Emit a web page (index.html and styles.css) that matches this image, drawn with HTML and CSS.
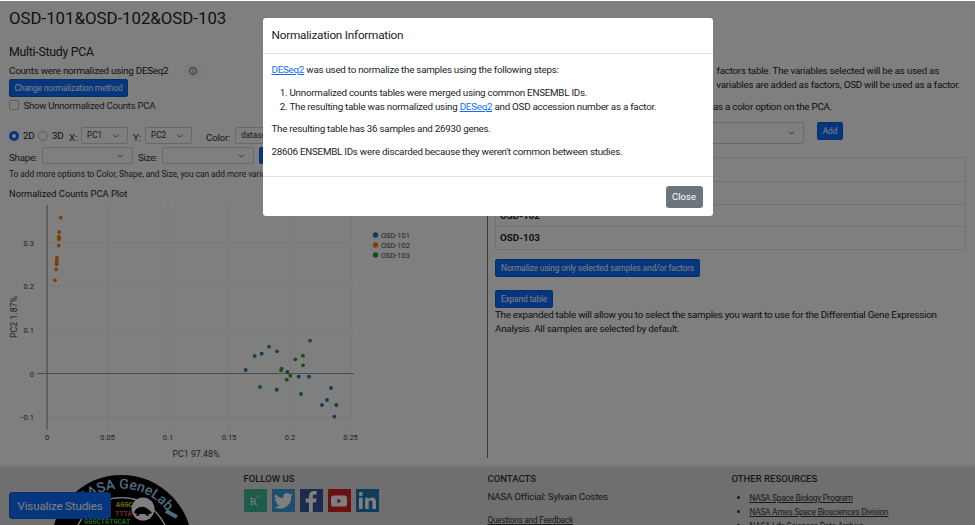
FILE: index.html
```html
<!DOCTYPE html>
<html lang="en">
<head>
    <meta charset="UTF-8">
    <meta name="viewport" content="width=device-width, initial-scale=1.0">
    <title>Multi-Study PCA</title>
    <link rel="stylesheet" href="styles.css">
</head>
<body>
    <div class="page">
        <h1 class="study-title">OSD-101&amp;OSD-102&amp;OSD-103</h1>

        <div class="columns">
            <!-- PCA controls and plot -->
            <div class="left-col">
                <h2 class="section-title">Multi-Study PCA</h2>
                <div class="norm-row">
                    <span class="norm-text">Counts were normalized using DESeq2</span>
                    <span class="info-btn">
                        <svg width="8" height="8" viewBox="0 0 16 16" fill="none" stroke="#222" stroke-width="1.4"><circle cx="8" cy="8" r="7"/><path d="M8 7v5M8 4v1.6"/></svg>
                    </span>
                </div>
                <button class="btn btn-change">Change normalization method</button>
                <label class="check-row"><span class="checkbox"></span>Show Unnormalized Counts PCA</label>

                <div class="control-row first-controls">
                    <span class="radio radio-on"></span><span class="radio-label label-2d">2D</span>
                    <span class="radio"></span><span class="radio-label label-3d">3D</span>
                    <span class="ctl-label label-x">X:</span>
                    <select class="sel sel-pc"><option>PC1</option></select>
                    <span class="ctl-label label-y">Y:</span>
                    <select class="sel sel-pc"><option>PC2</option></select>
                    <span class="ctl-label label-color">Color:</span>
                    <select class="sel sel-color"><option>dataset</option></select>
                </div>
                <div class="control-row second-controls">
                    <span class="ctl-label label-shape">Shape:</span>
                    <select class="sel sel-shape"></select>
                    <span class="ctl-label label-size">Size:</span>
                    <select class="sel sel-size"></select>
                    <span class="btn btn-hidden"></span>
                </div>
                <p class="hint">To add more options to Color, Shape, and Size, you can add more variables</p>

                <h3 class="plot-title">Normalized Counts PCA Plot</h3>
                <svg class="plot" width="470" height="270" viewBox="0 200 470 270">
                    <g class="grid">
                        <path d="M107.5 205V430M168 205V430M229 205V430M290 205V430M350.500 205V430"/>
                        <path d="M47 242.500H354M47 286H354M47 330H354M47 417H354"/>
                    </g>
                    <path class="axis-y" d="M47 205V430"/>
                    <path class="axis-x" d="M37 373.500H354"/>
                    <g class="ticks">
                        <text x="34" y="245.500" text-anchor="end">0.3</text>
                        <text x="34" y="289" text-anchor="end">0.2</text>
                        <text x="34" y="333" text-anchor="end">0.1</text>
                        <text x="34" y="376.500" text-anchor="end">0</text>
                        <text x="34" y="420" text-anchor="end">−0.1</text>
                        <text x="47" y="440" text-anchor="middle">0</text>
                        <text x="107.500" y="440" text-anchor="middle">0.05</text>
                        <text x="168" y="440" text-anchor="middle">0.1</text>
                        <text x="229" y="440" text-anchor="middle">0.15</text>
                        <text x="290" y="440" text-anchor="middle">0.2</text>
                        <text x="350.500" y="440" text-anchor="middle">0.25</text>
                    </g>
                    <text class="axis-title" x="196" y="457" text-anchor="middle">PC1 97.48%</text>
                    <text class="axis-title" transform="translate(17 317) rotate(-90)" text-anchor="middle">PC2 1.87%</text>
                    <g class="dots-orange">
                        <circle cx="60.700" cy="217.700" r="1.900"/><circle cx="59.300" cy="232" r="1.900"/>
                        <circle cx="58.700" cy="236.700" r="1.900"/><circle cx="59.300" cy="238" r="1.900"/>
                        <circle cx="59" cy="239.300" r="1.900"/><circle cx="58.700" cy="245.700" r="1.900"/>
                        <circle cx="57" cy="257.700" r="1.900"/><circle cx="56.700" cy="260" r="1.900"/>
                        <circle cx="56.700" cy="262.300" r="1.900"/><circle cx="56.700" cy="264.300" r="1.900"/>
                        <circle cx="56" cy="269.300" r="1.900"/><circle cx="55" cy="280.300" r="1.900"/>
                    </g>
                    <g class="dots-blue">
                        <circle cx="245.700" cy="370" r="1.900"/><circle cx="261.700" cy="353.700" r="1.900"/>
                        <circle cx="276.700" cy="389.700" r="1.900"/><circle cx="287.300" cy="372" r="1.900"/>
                        <circle cx="298.700" cy="376.700" r="1.900"/><circle cx="309" cy="376.700" r="1.900"/>
                        <circle cx="301" cy="394" r="1.900"/><circle cx="331" cy="388" r="1.900"/>
                        <circle cx="327" cy="400" r="1.900"/><circle cx="322" cy="405" r="1.900"/>
                        <circle cx="336.300" cy="405" r="1.900"/><circle cx="334.300" cy="416.700" r="1.900"/>
                    </g>
                    <g class="dots-green">
                        <circle cx="254.700" cy="356" r="1.900"/><circle cx="269" cy="346.700" r="1.900"/>
                        <circle cx="277" cy="351.300" r="1.900"/><circle cx="310" cy="340.700" r="1.900"/>
                        <circle cx="295.300" cy="359.300" r="1.900"/><circle cx="303" cy="355.700" r="1.900"/>
                        <circle cx="303" cy="365.300" r="1.900"/><circle cx="281.700" cy="368.700" r="1.900"/>
                        <circle cx="281" cy="370.300" r="1.900"/><circle cx="290.300" cy="375.700" r="1.900"/>
                        <circle cx="286.700" cy="379.700" r="1.900"/><circle cx="260" cy="387" r="1.900"/>
                    </g>
                    <g class="legend">
                        <circle class="leg-blue" cx="375.500" cy="235" r="2.700"/><text x="381" y="237.500">OSD-101</text>
                        <circle class="leg-orange" cx="375.500" cy="245" r="2.700"/><text x="381" y="247.500">OSD-102</text>
                        <circle class="leg-green" cx="375.500" cy="255" r="2.700"/><text x="381" y="257.500">OSD-103</text>
                    </g>
                </svg>
            </div>

            <!-- Factors table -->
            <div class="right-col">
                <p class="factor-line">factors table. The variables selected will be as used as</p>
                <p class="factor-line line-two">variables are added as factors, OSD will be used as a factor.</p>
                <p class="factor-line line-three">as a color option on the PCA.</p>
                <div class="add-row">
                    <select class="sel sel-factor"></select>
                    <button class="btn btn-add">Add</button>
                </div>
                <div class="study-table">
                    <div class="study-row"></div>
                    <div class="study-row">OSD-101</div>
                    <div class="study-row">OSD-102</div>
                    <div class="study-row">OSD-103</div>
                </div>
                <button class="btn btn-normalize">Normalize using only selected samples and/or factors</button>
                <button class="btn btn-expand">Expand table</button>
                <p class="expand-note">The expanded table will allow you to select the samples you want to use for the Differential Gene Expression Analysis. All samples are selected by default.</p>
            </div>
        </div>

        <footer class="footer">
            <div class="logo-col">
                <svg class="logo" width="160" height="60" viewBox="0 0 160 60">
                    <defs><path id="logoArc" d="M23.500 71.600A57 57 0 0 1 137.500 71.600"/></defs>
                    <circle cx="80.500" cy="71.600" r="70.600" fill="#000"/>
                    <text class="logo-name"><textPath href="#logoArc" startOffset="52.800%" text-anchor="middle">NASA GeneLab</textPath></text>
                    <path class="logo-mark" d="M125 37l11 6"/>
                    <circle cx="80.500" cy="71.600" r="48" fill="none" stroke="#fff" stroke-width="1.400"/>
                    <text class="logo-dna" x="75" y="33" fill="#d8d820">AGGC</text>
                    <text class="logo-dna" x="74" y="42" fill="#e85050">TTTA</text>
                    <text class="logo-dna" x="43" y="50" fill="#50c850">GGGCTGTGCAT</text>
                    <circle cx="102" cy="35" r="11.500" fill="#fff"/>
                    <path d="M93 39c1-5 8-8 12-5 2 1 5 3 6 5-2 1-3 1-4 1l1 2h-2l-2-2h-5l-2 2h-2l1-2z" fill="#000"/>
                </svg>
            </div>
            <div class="follow-col">
                <h4 class="foot-title">FOLLOW US</h4>
                <div class="social-row">
                    <span class="social social-rg">R<sup>G</sup></span>
                    <span class="social social-tw">
                        <svg width="19" height="16" viewBox="0 0 24 20" fill="#fff"><path d="M24 2.400a9.800 9.800 0 0 1-2.800.8A4.900 4.900 0 0 0 23.300.500a9.800 9.800 0 0 1-3.100 1.200 4.900 4.900 0 0 0-8.400 4.500A14 14 0 0 1 1.700 1a4.900 4.900 0 0 0 1.500 6.600 4.900 4.900 0 0 1-2.200-.6 4.900 4.900 0 0 0 3.900 4.900 4.900 4.900 0 0 1-2.200.1 4.900 4.900 0 0 0 4.600 3.400A9.900 9.900 0 0 1 0 17.400 14 14 0 0 0 21.600 5v-.6A10 10 0 0 0 24 2.400z"/></svg>
                    </span>
                    <span class="social social-fb">
                        <svg width="12" height="21" viewBox="0 0 13 24" fill="#fff"><path d="M8.500 24V13h3.700l.6-4.300H8.500V6c0-1.200.4-2.100 2.200-2.100H13V.2C12.600.1 11.300 0 9.800 0 6.500 0 4.200 2 4.200 5.700v3H.5V13h3.700v11z"/></svg>
                    </span>
                    <span class="social social-yt">
                        <svg width="16" height="12" viewBox="0 0 20 14"><rect width="20" height="14" rx="4" fill="#fff"/><path d="M8 4v6l5-3z" fill="#d82323"/></svg>
                    </span>
                    <span class="social social-in">
                        <svg width="17" height="17" viewBox="0 0 18 18" fill="#fff"><rect y="6" width="3.800" height="12"/><circle cx="1.900" cy="2.200" r="2.200"/><path d="M6.500 6h3.600v1.700c.6-1 1.900-2 3.800-2 3.400 0 4.100 2.300 4.100 5.300v7h-3.800v-6.200c0-1.500-.1-3-1.900-3s-2 1.400-2 2.900V18H6.500z"/></svg>
                    </span>
                </div>
            </div>
            <div class="contacts-col">
                <h4 class="foot-title">CONTACTS</h4>
                <p class="official">NASA Official: Sylvain Costes</p>
                <a class="foot-link feedback" href="#">Questions and Feedback</a>
            </div>
            <div class="resources-col">
                <h4 class="foot-title">OTHER RESOURCES</h4>
                <ul class="res-list">
                    <li><a class="foot-link" href="#">NASA Space Biology Program</a></li>
                    <li><a class="foot-link" href="#">NASA Ames Space Biosciences Division</a></li>
                    <li><a class="foot-link" href="#">NASA Life Sciences Data Archive</a></li>
                </ul>
            </div>
        </footer>
    </div>

    <button class="btn visualize-btn">Visualize Studies</button>

    <!-- Modal -->
    <div class="backdrop">
        <div class="modal">
            <div class="modal-header">Normalization Information</div>
            <div class="modal-body">
                <p><a href="#">DESeq2</a> was used to normalize the samples using the following steps:</p>
                <ol>
                    <li>Unnormalized counts tables were merged using common ENSEMBL IDs.</li>
                    <li>The resulting table was normalized using <a href="#">DESeq2</a> and OSD accession number as a factor.</li>
                </ol>
                <p>The resulting table has 36 samples and 26930 genes.</p>
                <p>28606 ENSEMBL IDs were discarded because they weren't common between studies.</p>
            </div>
            <div class="modal-footer">
                <button class="btn-close">Close</button>
            </div>
        </div>
    </div>
</body>
</html>
```

FILE: styles.css
```css
/* Base */
html, body {
    height: 100%;
}

body {
    margin: 0;
    overflow: hidden;
    background-color: #fff;
    color: #212529;
    font-family: 'Roboto', 'Liberation Sans', sans-serif;
    font-size: 9.8px;
    letter-spacing: -0.25px;
}

svg {
    letter-spacing: 0;
}

p, h1, h2, h3, h4, ul, ol {
    margin: 0;
}

.page {
    height: 525px;
    display: flex;
    flex-direction: column;
    overflow: hidden;
}

.study-title {
    padding: 8px 9px 0;
    height: 37px;
    font-size: 16.800px;
    font-weight: 400;
    letter-spacing: 0;
    line-height: 20px;
    box-sizing: border-box;
}

.columns {
    display: flex;
    height: 421px;
}

/* Left column */
.left-col {
    width: 488px;
    padding: 8px 0 0 9px;
    box-sizing: border-box;
    border-right: 1px solid #777;
    flex: none;
}

.section-title {
    font-size: 12.300px;
    font-weight: 400;
    line-height: 14px;
}

.norm-row {
    display: flex;
    align-items: center;
    margin-top: 6px;
    height: 12px;
    line-height: 12px;
}

.norm-text {
    width: 175px;
}

.info-btn {
    width: 18px;
    height: 13px;
    display: flex;
    align-items: center;
    justify-content: center;
    background-color: #f8f8f8;
}

.btn {
    display: block;
    border: 1px solid #0d5ed8;
    border-radius: 2px;
    background-color: #0d6efd;
    color: #fff;
    font-family: inherit;
    font-size: 8.300px;
    letter-spacing: -0.12px;
    padding: 0;
    box-sizing: border-box;
    white-space: nowrap;
}

.btn-change {
    width: 119px;
    height: 18px;
    margin-top: 2px;
}

.check-row {
    display: flex;
    align-items: center;
    gap: 4.500px;
    height: 12px;
    margin-top: 2px;
    font-size: 9.600px;
    color: #333;
}

.checkbox {
    width: 8px;
    height: 8px;
    border: 1px solid #bbb;
    border-radius: 2px;
    background-color: #fff;
}

/* PCA controls */
.control-row {
    display: flex;
    align-items: center;
}

.first-controls {
    margin-top: 16px;
    height: 17px;
}

.second-controls {
    margin-top: 3px;
    height: 17px;
}

.radio {
    width: 8px;
    height: 8px;
    border: 1px solid #bbb;
    border-radius: 50%;
    background-color: #fff;
    flex: none;
}

.radio-on {
    border: 3px solid #0d6efd;
    width: 4px;
    height: 4px;
}

.radio-label {
    margin-left: 4px;
    flex: none;
}

.label-2d {
    width: 15px;
}

.label-3d {
    width: 17px;
}

.ctl-label {
    padding-top: 3px;
    color: #333;
    flex: none;
}

.label-x, .label-y {
    width: 12px;
}

.label-y {
    margin-left: 5px;
}

.label-color {
    width: 29px;
    margin-left: 14px;
}

.label-shape {
    width: 33px;
}

.label-size {
    width: 24px;
    margin-left: 5px;
}

.sel {
    appearance: none;
    height: 17px;
    border: 1px solid #ced4da;
    border-radius: 2px;
    padding: 0 0 2px 5px;
    color: #333;
    font-family: inherit;
    font-size: 8.200px;
    background-color: #fff;
    background-image: url("data:image/svg+xml,%3Csvg xmlns='http://www.w3.org/2000/svg' viewBox='0 0 16 16'%3E%3Cpath fill='none' stroke='%23343a40' stroke-linecap='round' stroke-linejoin='round' stroke-width='2' d='M2 5l6 6 6-6'/%3E%3C/svg%3E");
    background-repeat: no-repeat;
    background-position: right 8px center;
    background-size: 7px 6px;
    flex: none;
    box-sizing: border-box;
}

.sel-pc {
    width: 47px;
}

.sel-color {
    width: 70px;
}

.sel-shape {
    width: 91px;
}

.sel-size {
    width: 92px;
}

.btn-hidden {
    width: 60px;
    height: 17px;
    margin-left: 5px;
}

.hint {
    margin-top: 5px;
    font-size: 8.400px;
    letter-spacing: -0.05px;
    line-height: 11px;
    color: #333;
    white-space: nowrap;
}

.plot-title {
    margin-top: 8px;
    font-size: 9.300px;
    font-weight: 400;
    letter-spacing: 0;
    line-height: 12px;
}

.plot {
    display: block;
    margin: 0 0 0 -9px;
}

.grid path {
    fill: none;
    stroke: #f0f0f0;
    stroke-width: 1;
}

.axis-y {
    fill: none;
    stroke: #aaa;
    stroke-width: 1.500;
}

.axis-x {
    fill: none;
    stroke: #999;
    stroke-width: 1;
}

.ticks text {
    font-size: 7.500px;
    fill: #444;
}

.axis-title {
    font-size: 8.800px;
    fill: #444;
}

.legend text {
    font-size: 7.400px;
    fill: #444;
}

.dots-orange circle, .leg-orange {
    fill: #ff7f0e;
}

.dots-blue circle, .leg-blue {
    fill: #1f77b4;
}

.dots-green circle, .leg-green {
    fill: #2ca02c;
}

/* Right column */
.right-col {
    flex: 1;
    padding: 0 0 0 7px;
    min-width: 0;
}

.factor-line {
    margin-top: 27px;
    padding-right: 36px;
    text-align: right;
    line-height: 14px;
    white-space: nowrap;
}

.line-two {
    margin-top: 0;
    padding-right: 15px;
}

.line-three {
    margin-top: 8px;
    padding-right: 143px;
}

.add-row {
    display: flex;
    align-items: flex-start;
    gap: 13px;
    margin-top: 8px;
    height: 22px;
}

.sel-factor {
    width: 309px;
    height: 22px;
}

.btn-add {
    width: 26px;
    height: 18px;
}

.study-table {
    margin: 13px 9px 0 0;
    border: 1px solid #dee2e6;
    font-size: 9.800px;
    font-weight: 700;
    letter-spacing: 0;
}

.study-row {
    height: 22.800px;
    line-height: 22px;
    padding-left: 4px;
    box-sizing: border-box;
    border-top: 1px solid #dee2e6;
}

.study-row:first-child {
    border-top: none;
}

.btn-normalize {
    margin-top: 9px;
    width: 205px;
    height: 18px;
}

.btn-expand {
    margin-top: 13px;
    width: 58px;
    height: 18px;
}

.expand-note {
    width: 462px;
    line-height: 14px;
}

/* Footer */
.footer {
    height: 60px;
    flex: none;
    display: flex;
    background-color: #dedede;
    border-top: 2px solid #eee;
    margin-top: 7px;
    box-sizing: border-box;
    overflow: hidden;
    color: #333;
}

.logo-col {
    width: 243.500px;
    padding: 7px 0 0 41px;
    box-sizing: border-box;
    flex: none;
}

.logo {
    display: block;
}

.logo-name {
    font-size: 14px;
    font-weight: 500;
    fill: #9ad4ff;
}

.logo-mark {
    stroke: #9ad4ff;
    stroke-width: 4;
}

.logo-dna {
    font-family: 'Liberation Mono', monospace;
    font-size: 7px;
    font-weight: 700;
}

.follow-col {
    width: 244px;
    flex: none;
}

.contacts-col {
    width: 244px;
    flex: none;
}

.foot-title {
    margin-top: 6px;
    font-size: 9.500px;
    font-weight: 500;
    letter-spacing: 0;
    line-height: 12px;
    color: #333;
}

.social-row {
    display: flex;
    gap: 5px;
    margin-top: 4px;
}

.social {
    width: 23px;
    height: 23px;
    display: flex;
    align-items: center;
    justify-content: center;
    flex: none;
}

.social-rg {
    background-color: #3ab896;
    color: #fff;
    font-family: 'Liberation Serif', serif;
    font-size: 11px;
}

.social-rg sup {
    font-size: 5px;
    align-self: flex-start;
    margin-top: 5px;
}

.social-tw {
    background-color: #3a9ddb;
}

.social-fb {
    background-color: #3b5998;
    align-items: flex-end;
}

.social-yt {
    background-color: #d82323;
}

.social-in {
    background-color: #1d7db5;
}

.official {
    margin-top: 6px;
    line-height: 12px;
}

.foot-link {
    color: #333;
    font-size: 8.300px;
    line-height: 13px;
}

.feedback {
    display: block;
    margin-top: 11px;
}

.res-list {
    margin-top: 6px;
    padding-left: 18px;
    line-height: 13px;
}

.visualize-btn {
    position: fixed;
    left: 9px;
    top: 492px;
    width: 102px;
    height: 27px;
    border-radius: 3px;
    font-size: 11.500px;
}

/* Modal */
.backdrop {
    position: fixed;
    inset: 1px 0 0;
    background-color: rgba(0, 0, 0, 0.5);
}

.modal {
    position: absolute;
    left: 262.500px;
    top: 17px;
    width: 450px;
    height: 198px;
    background-color: #fff;
    border-radius: 3px;
    display: flex;
    flex-direction: column;
}

.modal-header {
    height: 36px;
    flex: none;
    padding-left: 9px;
    font-size: 11.800px;
    line-height: 35px;
    border-bottom: 1px solid #dee2e6;
    box-sizing: border-box;
}

.modal-body {
    flex: 1;
    padding: 9px 9px 0;
    line-height: 14px;
}

.modal-body p {
    margin-bottom: 8.500px;
}

.modal-body ol {
    margin-bottom: 8.500px;
    padding-left: 18px;
}

.modal-body a {
    color: #0d6efd;
}

.modal-footer {
    height: 40px;
    flex: none;
    display: flex;
    align-items: center;
    justify-content: flex-end;
    padding-right: 10px;
    border-top: 1px solid #dee2e6;
    box-sizing: border-box;
}

.btn-close {
    width: 37px;
    height: 22px;
    padding: 0;
    border: none;
    border-radius: 3px;
    background-color: #6c757d;
    color: #fff;
    font-family: inherit;
    font-size: 9.500px;
}
```
